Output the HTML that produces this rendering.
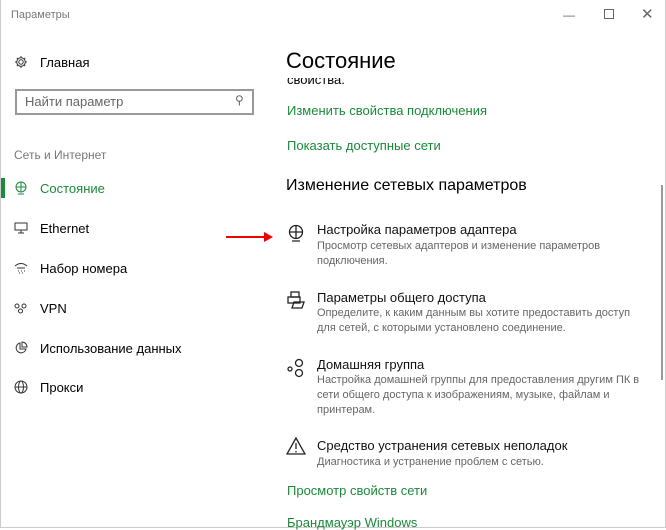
<!DOCTYPE html><html><head><meta charset="utf-8"><style>
*{margin:0;padding:0;box-sizing:border-box}
body{width:666px;height:528px;overflow:hidden;background:#fff;font-family:"Liberation Sans",sans-serif;position:relative;color:#000}
.a{position:absolute;white-space:nowrap}
.nav{font-size:13px;left:40px}
.ic{position:absolute;left:14px}
.g{color:#1a8a3a}
.t{font-size:13px;left:317px;color:#111}
.d{font-size:11px;left:317px;color:#666;line-height:15px}
.lk{font-size:13px;left:287px;color:#1a8a3a}
</style></head><body>
<div class="a" style="left:0;top:0;width:666px;height:528px;border:1px solid #ccc;border-top:none"></div>
<div class="a" style="left:11px;top:9px;font-size:11px;color:#777">Параметры</div>
<div class="a" style="left:563px;top:8px;font-size:12px;color:#666">—</div>
<div class="a" style="left:604px;top:9px;width:10px;height:10px;border:1px solid #666"></div>
<div class="a" style="left:641px;top:5px;font-size:15px;color:#666">✕</div>

<svg class="ic" style="top:55px" width="14" height="14" viewBox="0 0 14 14" fill="none" stroke="#333" stroke-width="1"><circle cx="7" cy="7" r="2.2"/><path d="M7 1v2M7 11v2M1 7h2M11 7h2M2.8 2.8l1.4 1.4M9.8 9.8l1.4 1.4M2.8 11.2l1.4-1.4M9.8 4.2l1.4-1.4"/><circle cx="7" cy="7" r="4.3"/></svg>
<div class="a nav" style="top:55px">Главная</div>
<div class="a" style="left:15px;top:89px;width:239px;height:26px;border:2px solid #999"></div>
<div class="a" style="left:25px;top:94px;font-size:13px;color:#666">Найти параметр</div>
<div class="a" style="left:235px;top:93px;font-size:12px;color:#666">⚲</div>
<div class="a" style="left:14px;top:148px;font-size:12px;color:#777">Сеть и Интернет</div>
<div class="a" style="left:1px;top:178px;width:4px;height:20px;background:#1a8a3a"></div>
<svg class="ic" style="top:181px" width="14" height="14" viewBox="0 0 14 14" fill="none" stroke="#1a8a3a"><circle cx="7" cy="6" r="5"/><path d="M2 6h10M7 1v10M4 13h6"/></svg>
<div class="a nav g" style="top:181px">Состояние</div>
<svg class="ic" style="top:221px" width="14" height="14" viewBox="0 0 14 14" fill="none" stroke="#333"><rect x="1" y="2" width="12" height="7"/><path d="M7 9v3M4 12h6"/></svg>
<div class="a nav" style="top:221px">Ethernet</div>
<svg class="ic" style="top:261px" width="14" height="14" viewBox="0 0 14 14" fill="none" stroke="#333"><path d="M1 5q6-5 12 0M3 7h8M4 10h1M7 10h1M10 10h1M5 12h1M8 12h1"/></svg>
<div class="a nav" style="top:261px">Набор номера</div>
<svg class="ic" style="top:301px" width="14" height="14" viewBox="0 0 14 14" fill="none" stroke="#333"><circle cx="3" cy="5" r="2"/><circle cx="10" cy="5" r="2"/><circle cx="6.5" cy="10" r="2"/></svg>
<div class="a nav" style="top:301px">VPN</div>
<svg class="ic" style="top:341px" width="14" height="14" viewBox="0 0 14 14" fill="none" stroke="#333"><path d="M6 2a5 5 0 1 0 6 6H6z M8 1v5h5A5 5 0 0 0 8 1z"/></svg>
<div class="a nav" style="top:341px">Использование данных</div>
<svg class="ic" style="top:380px" width="14" height="14" viewBox="0 0 14 14" fill="none" stroke="#333"><circle cx="7" cy="7" r="6"/><ellipse cx="7" cy="7" rx="2.5" ry="6"/><path d="M1 7h12"/></svg>
<div class="a nav" style="top:380px">Прокси</div>

<div class="a" style="left:286px;top:48px;font-size:22px">Состояние</div>
<div class="a" style="left:287px;top:78px;width:370px;height:10px;overflow:hidden"><div style="font-size:13px;margin-top:-6px">свойства.</div></div>
<div class="a lk" style="top:103px">Изменить свойства подключения</div>
<div class="a lk" style="top:138px">Показать доступные сети</div>
<div class="a" style="left:286px;top:177px;font-size:16px">Изменение сетевых параметров</div>
<div class="a" style="left:226px;top:236px;width:40px;height:2px;background:#e00"></div>
<div class="a" style="left:264px;top:232px;width:0;height:0;border-left:9px solid #e00;border-top:5px solid transparent;border-bottom:5px solid transparent"></div>

<svg class="a" style="left:287px;top:224px" width="18" height="18" viewBox="0 0 18 18" fill="none" stroke="#222" stroke-width="1.3"><circle cx="9" cy="8" r="6.5"/><path d="M2.5 8h13M9 1.5v13M5 17h8"/></svg>
<div class="a t" style="top:222px">Настройка параметров адаптера</div>
<div class="a d" style="top:239px">Просмотр сетевых адаптеров и изменение параметров<br>подключения.</div>
<svg class="a" style="left:287px;top:291px" width="18" height="18" viewBox="0 0 18 18" fill="none" stroke="#222" stroke-width="1.3"><rect x="4" y="1" width="8" height="5"/><rect x="1" y="6" width="12" height="6"/><path d="M7 11h10l-2 6H5z"/></svg>
<div class="a t" style="top:290px">Параметры общего доступа</div>
<div class="a d" style="top:306px">Определите, к каким данным вы хотите предоставить доступ<br>для сетей, с которыми установлено соединение.</div>
<svg class="a" style="left:287px;top:358px" width="20" height="20" viewBox="0 0 20 20" fill="none" stroke="#222" stroke-width="1.3"><circle cx="3" cy="11" r="2"/><circle cx="12" cy="5" r="3.5"/><circle cx="12" cy="15" r="3.5"/></svg>
<div class="a t" style="top:357px">Домашняя группа</div>
<div class="a d" style="top:373px">Настройка домашней группы для предоставления другим ПК в<br>сети общего доступа к изображениям, музыке, файлам и<br>принтерам.</div>
<svg class="a" style="left:286px;top:437px" width="20" height="18" viewBox="0 0 20 18" fill="none" stroke="#222" stroke-width="1.3"><path d="M10 1L1 17h18z M10 6v6M10 14v1.5"/></svg>
<div class="a t" style="top:438px">Средство устранения сетевых неполадок</div>
<div class="a d" style="top:455px">Диагностика и устранение проблем с сетью.</div>
<div class="a lk" style="top:483px">Просмотр свойств сети</div>
<div class="a lk" style="top:515px">Брандмауэр Windows</div>
<div class="a" style="left:661px;top:185px;width:2px;height:195px;background:#999"></div>
</body></html>
